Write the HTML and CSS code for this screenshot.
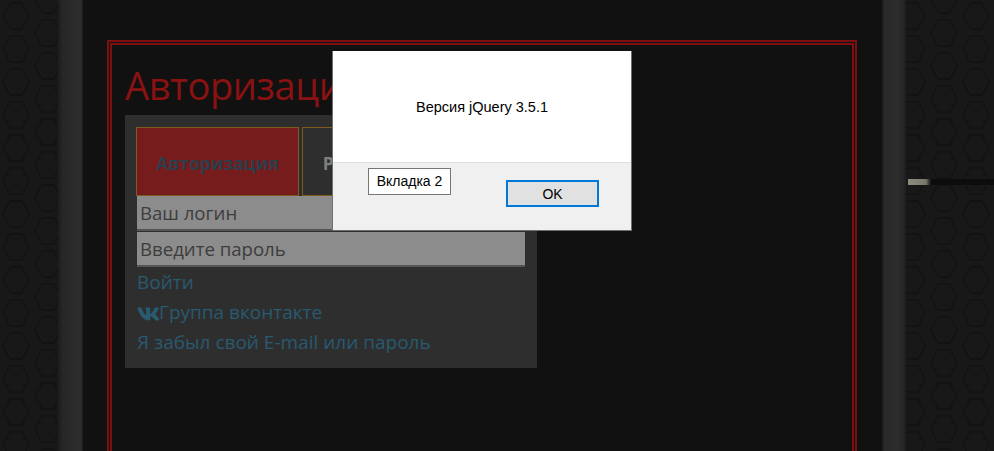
FILE: index.html
```html
<!DOCTYPE html>
<html lang="ru">
<head>
    <meta charset="UTF-8">
    <title>Авторизация</title>
    <link rel="stylesheet" href="styles.css">
</head>
<body>
    <div class="page">
        <main class="content">
            <section class="frame">
                <h1>Авторизация</h1>
                <div class="panel">
                    <div class="tabs">
                        <a class="tab active">Авторизация</a>
                        <a class="tab">Регистрация</a>
                    </div>
                    <input class="field" type="text" placeholder="Ваш логин">
                    <input class="field" type="password" placeholder="Введите пароль">
                    <ul class="links">
                        <li><a>Войти</a></li>
                        <li>
                            <a class="vk-link">
                                <svg class="vk-icon" viewBox="20 90 540 335" width="22" height="14">
                                    <path d="M545 117.700c3.700-12.500 0-21.700-17.800-21.700h-58.900c-15 0-21.900 7.900-25.600 18.700-7.500 21.300-33.900 85.500-67.500 124.200-10.800 10.900-15.700 14.300-21.600 14.300-3 0-9.100-3.400-9.100-15.900V117.700c0-15-4.200-21.700-16.600-21.700h-92.600c-9.400 0-15 7-15 13.500 0 14.200 21.200 17.500 23.400 57.500v86.800c0 19-3.400 22.500-10.900 22.500-20 0-68.600-73.400-97.400-157.400-5.800-16.300-11.500-22.900-26.600-22.900H50c-16.800 0-20.200 7.900-20.200 16.700 0 15.600 20 93 93.100 195.300 48.700 69.800 117.300 107.700 179.700 107.700 37.500 0 42.100-8.400 42.100-22.900v-52.800c0-16.800 3.500-20.200 15.400-20.200 8.800 0 23.700 4.300 58.700 38 40 40 46.600 57.900 69 57.900h58.900c16.800 0 25.200-8.400 20.400-25-11.200-35-85.400-107-89-112-8.700-11.200-6.200-16.200 0-26.200.1-.1 72-101.300 79.400-135.600z"/>
                                </svg>Группа вконтакте
                            </a>
                        </li>
                        <li><a>Я забыл свой E-mail или пароль</a></li>
                    </ul>
                </div>
            </section>
        </main>
    </div>

    <!-- Browser alert and the tooltip over it -->
    <div class="dialog">
        <div class="dialog-body">Версия jQuery 3.5.1</div>
        <div class="dialog-footer">
            <button class="ok-btn">OK</button>
        </div>
    </div>
    <div class="hint">Вкладка 2</div>
    <div class="wire"></div>
</body>
</html>
```

FILE: styles.css
```css
html, body {
    height: 100%;
    overflow: hidden;
}
body {
    margin: 0;
    font-family: 'Open Sans', 'Noto Sans', sans-serif;
    background-color: #181818;
    background-image: url("data:image/svg+xml,%3Csvg xmlns='http://www.w3.org/2000/svg' width='64' height='33' viewBox='0 0 64 33'%3E%3Cg fill='none' stroke='%23131313' stroke-width='2' stroke-linejoin='round'%3E%3Cpath d='M10 3h12l7 13-7 13H10L3 16z'/%3E%3Cpath d='M42 -13h12l7 13-7 13H42l-7-13z'/%3E%3Cpath d='M42 20h12l7 13-7 13H42l-7-13z'/%3E%3C/g%3E%3C/svg%3E");
}
.page {
    width: 848px;
    height: 451px;
    margin-left: 58px;
    padding: 0 24px 0 25px;
    box-sizing: border-box;
    background: linear-gradient(to right, #1c1c1c 0, #272727 5px, #2b2b2b 60%, #2e2e2e 92%, #1a1a1a 100%) left / 25px 100% no-repeat,
                linear-gradient(to right, #1a1a1a 0, #292929 10%, #2d2d2d 60%, #262626 90%, #1c1c1c 100%) right / 24px 100% no-repeat;
}
.content {
    height: 100%;
    padding: 40px 25px 0 24px;
    box-sizing: border-box;
    overflow: hidden;
    background: #111111;
}
.frame {
    height: 600px;
    padding: 13px 13px;
    border: 5px double #7c1010;
    box-sizing: border-box;
}
h1 {
    margin: 0;
    font-size: 38px;
    line-height: 55px;
    letter-spacing: -0.4px;
    font-weight: 400;
    color: #8b1212;
    white-space: nowrap;
}
.panel {
    width: 412px;
    height: 253px;
    margin-top: 2px;
    padding: 12px 12px 0 11px;
    box-sizing: border-box;
    background: #2e2e2e;
}
.tabs {
    display: flex;
    gap: 3px;
}
.tab {
    width: 163px;
    height: 69px;
    box-sizing: border-box;
    border: 1px solid #7d5a1e;
    background: #2e2e2e;
    color: #7f7f7f;
    font-size: 17.500px;
    font-weight: 700;
    line-height: 70px;
    text-align: center;
}
.tab + .tab {
    padding-right: 4px;
}
.tab.active {
    background: #761c1c;
    color: #2c3e4c;
}
.field {
    display: block;
    width: 388px;
    height: 35px;
    margin: 0 0 1px 1px;
    padding: 0 3px;
    box-sizing: border-box;
    border: 0;
    border-bottom: 2px solid #555555;
    background: #8c8c8c;
    font-family: inherit;
    font-size: 18.600px;
}
.field::placeholder {
    color: #3d3d3d;
    opacity: 1;
}
.links {
    list-style: none;
    margin: -1px 0 0 1px;
    padding: 0;
    font-size: 19px;
    line-height: 30px;
    color: #285a70;
}
.vk-icon {
    vertical-align: -2px;
    fill: #285a70;
}

.dialog {
    position: absolute;
    left: 332px;
    top: 51px;
    width: 300px;
    height: 180px;
    box-sizing: border-box;
    border: 1px solid #6f6f6f;
    border-top: 0;
    background: #f0f0f0;
    font-family: 'Liberation Sans', Arial, sans-serif;
}
.dialog-body {
    height: 111px;
    border-bottom: 1px solid #dfdfdf;
    background: #ffffff;
    color: #000000;
    font-size: 14.500px;
    line-height: 112px;
    text-align: center;
}
.dialog-footer {
    display: flex;
    justify-content: flex-end;
    padding: 17px 32px 0 0;
}
.ok-btn {
    width: 93px;
    height: 27px;
    border: 2px solid #0078d7;
    background: #e1e1e1;
    color: #000000;
    font-family: inherit;
    font-size: 14px;
    padding: 0;
}
.hint {
    position: absolute;
    left: 368px;
    top: 168px;
    width: 83px;
    height: 27px;
    box-sizing: border-box;
    border: 1px solid #767676;
    background: #ffffff;
    color: #000000;
    font-family: 'Liberation Sans', Arial, sans-serif;
    font-size: 14px;
    line-height: 25px;
    text-align: center;
}
.wire {
    position: absolute;
    left: 908px;
    top: 179px;
    width: 86px;
    height: 6px;
    background: linear-gradient(to right, #8e8e80 0, #77776a 18px, #0d0d0d 23px);
    filter: blur(0.6px);
}
```
